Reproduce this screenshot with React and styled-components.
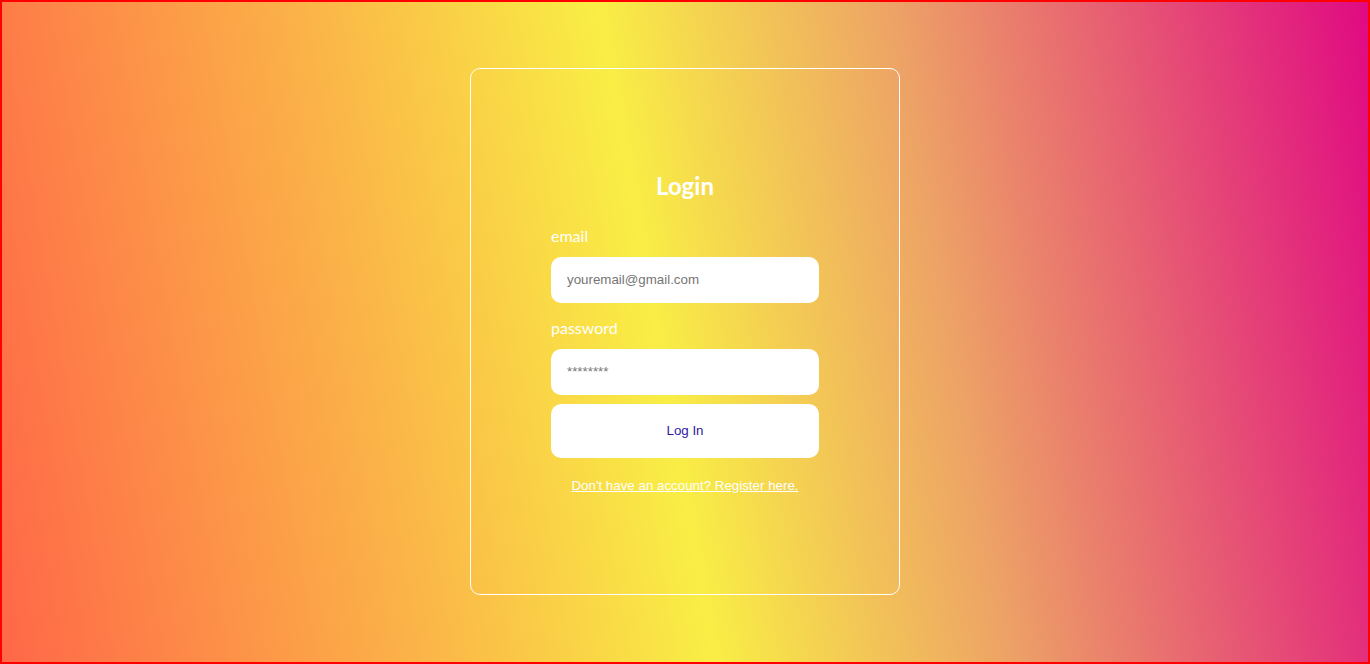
import React from "react";
import styled, { createGlobalStyle } from "styled-components";

const GlobalStyle = createGlobalStyle`
  html, body { margin: 0; padding: 0; }
  * { box-sizing: border-box; }
`;

const Page = styled.div`
  height: 100vh;
  width: 100%;
  border: 2px solid #ff0000;
  padding-bottom: 1px;
  background: linear-gradient(80deg, #ff6748 0%, #fbb348 28%, #f9ee45 48%, #eda266 68%, #e00a82 100%);
  display: flex;
  align-items: center;
  justify-content: center;
`;

const Card = styled.div`
  width: 430px;
  height: 527px;
  border: 1px solid #ffffff;
  border-radius: 10px;
  padding: 0 80px;
  display: flex;
  flex-direction: column;
  justify-content: center;
`;

const Form = styled.form`
  display: flex;
  flex-direction: column;
  margin-top: 1px;
`;

const Title = styled.h2`
  margin: 0 0 26px;
  font-family: Lato, "Open Sans", sans-serif;
  font-weight: 700;
  font-size: 24px;
  line-height: 30px;
  color: #ffffff;
  text-align: center;
`;

const Label = styled.label`
  display: block;
  font-family: Lato, "Open Sans", sans-serif;
  font-size: 16px;
  line-height: 18px;
  color: #ffffff;
  margin: ${(p) => (p.$first ? "0" : "16px")} 0 12px;
`;

const Input = styled.input`
  width: 100%;
  height: 46px;
  border: none;
  border-radius: 10px;
  background: #ffffff;
  padding: 0 16px;
  font-family: "Liberation Sans", Arial, sans-serif;
  font-size: 13.33px;
  color: #333;
  outline: none;
  &::placeholder { color: #757575; }
`;

const Button = styled.button`
  width: 100%;
  height: 54px;
  margin-top: 9px;
  border: none;
  border-radius: 10px;
  background: #ffffff;
  font-family: "Liberation Sans", Arial, sans-serif;
  font-size: 13.33px;
  color: #2e1a9e;
  cursor: pointer;
`;

const RegisterLink = styled.a`
  display: block;
  margin-top: 20px;
  text-align: center;
  font-family: "Liberation Sans", Arial, sans-serif;
  font-size: 13.33px;
  line-height: 16px;
  color: #ffffff;
  text-decoration: underline;
`;

export default function App() {
  return (
    <>
      <GlobalStyle />
      <Page>
        <Card>
          <Form onSubmit={(e) => e.preventDefault()}>
            <Title>Login</Title>
            <Label $first htmlFor="email">email</Label>
            <Input id="email" type="email" placeholder="youremail@gmail.com" />
            <Label htmlFor="password">password</Label>
            <Input id="password" type="password" placeholder="********" />
            <Button type="submit">Log In</Button>
            <RegisterLink href="#">Don't have an account? Register here.</RegisterLink>
          </Form>
        </Card>
      </Page>
    </>
  );
}
